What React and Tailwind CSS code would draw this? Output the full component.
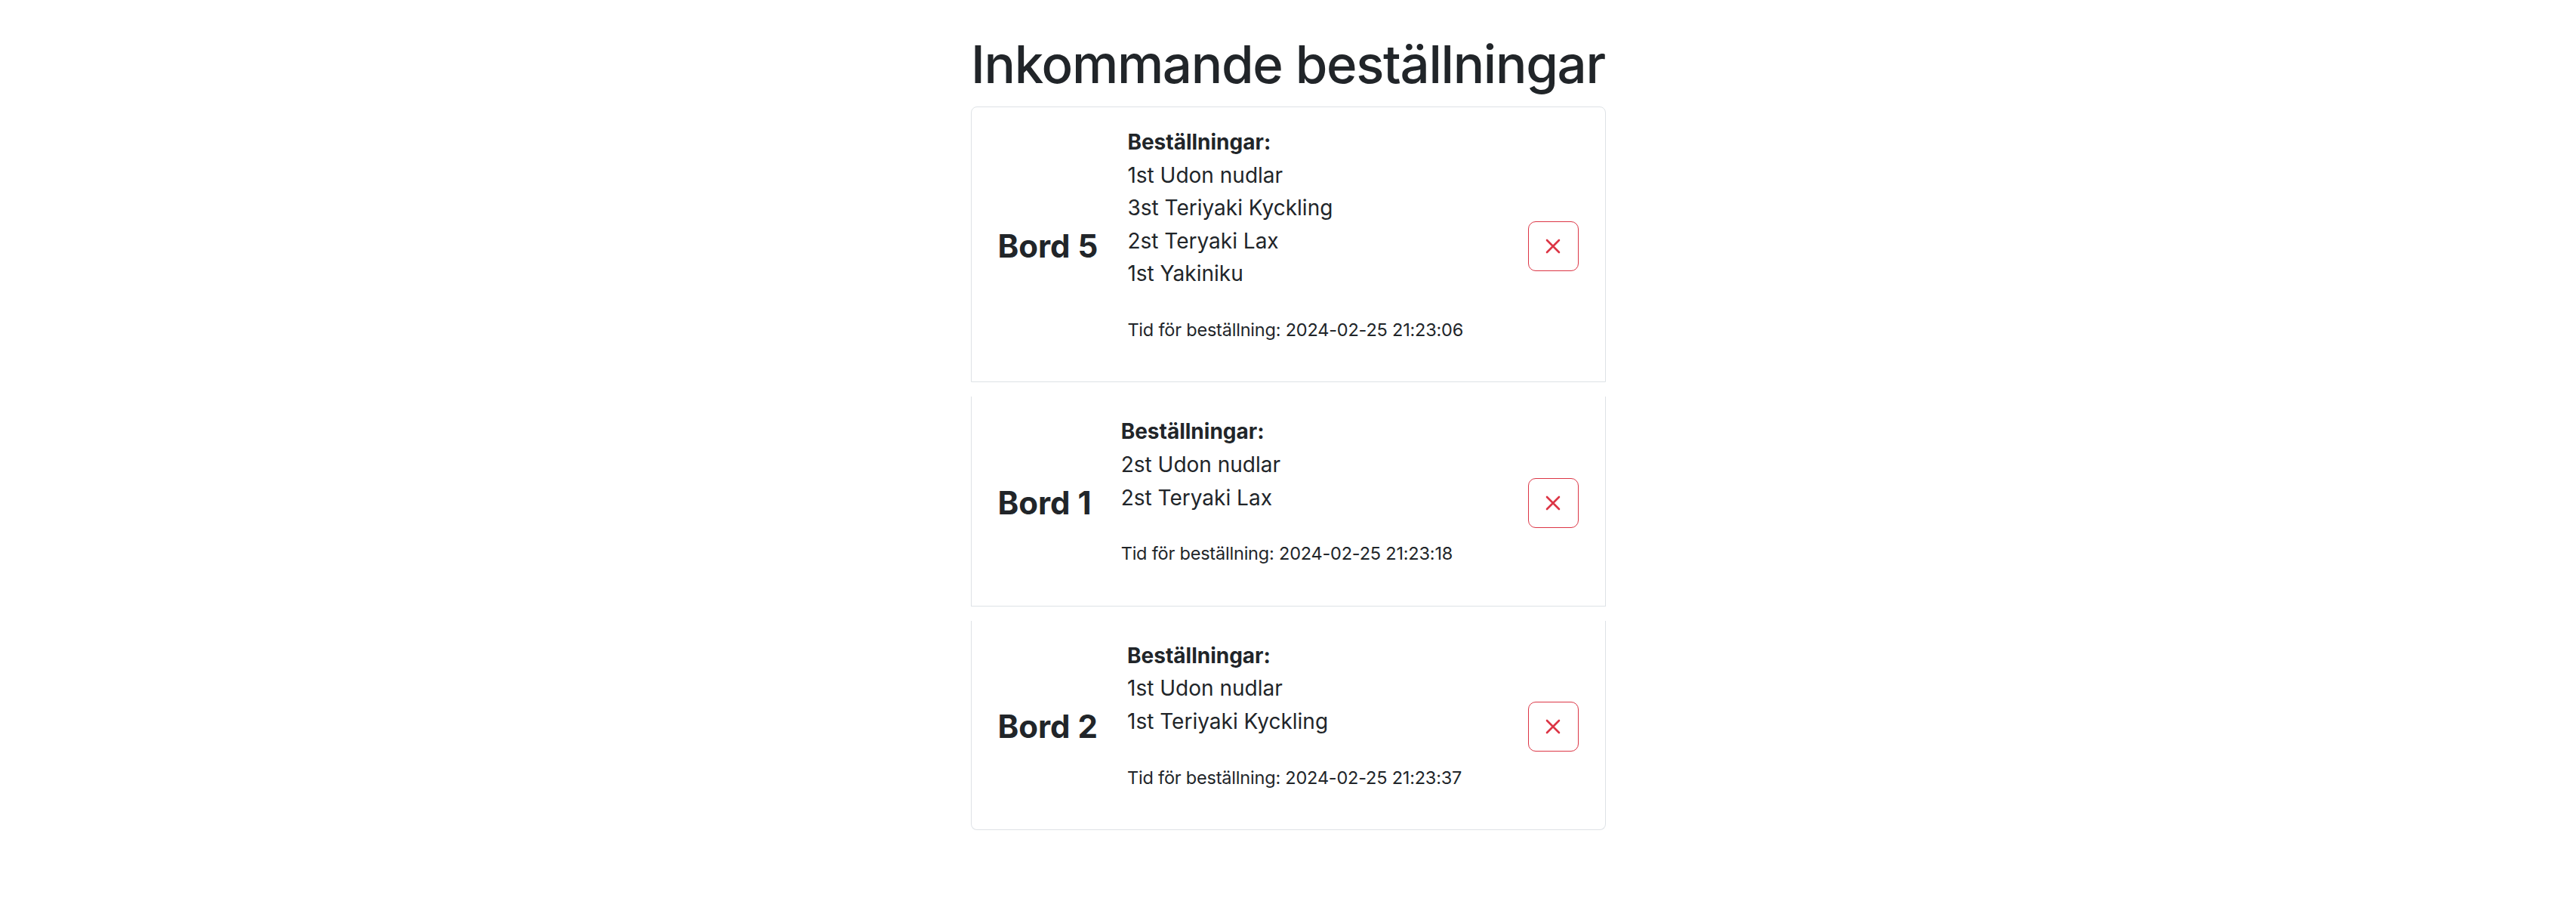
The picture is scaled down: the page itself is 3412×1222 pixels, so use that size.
import React from "react";

const orders = [
  {
    table: "Bord 5",
    items: ["1st Udon nudlar", "3st Teriyaki Kyckling", "2st Teryaki Lax", "1st Yakiniku"],
    time: "2024-02-25 21:23:06",
  },
  {
    table: "Bord 1",
    items: ["2st Udon nudlar", "2st Teryaki Lax"],
    time: "2024-02-25 21:23:18",
  },
  {
    table: "Bord 2",
    items: ["1st Udon nudlar", "1st Teriyaki Kyckling"],
    time: "2024-02-25 21:23:37",
  },
];

function XIcon() {
  return (
    <svg width="24" height="24" viewBox="0 0 24 24" fill="none">
      <path d="M4 4 L20 20 M20 4 L4 20" stroke="#dc3545" strokeWidth="2.6" strokeLinecap="round" />
    </svg>
  );
}

export default function App() {
  return (
    <div
      className="min-h-[1222px] bg-white text-[#212529]"
      style={{ fontFamily: "Inter, 'Noto Sans', 'Liberation Sans', sans-serif" }}
    >
      <div className="mx-auto w-[841px] pt-[43px]">
        <h1 className="text-center text-[69px] font-medium leading-[84px] tracking-[-1.3px] mb-[14px] whitespace-nowrap">
          Inkommande beställningar
        </h1>
        <div className="flex flex-col gap-[19px]">
          {orders.map((o, i) => (
            <div
              key={i}
              className={
                "flex items-center border-x border-b border-[#dee2e6] bg-white px-[35px] pt-[25px] pb-[20px] " +
                (i === 0 ? "border-t rounded-t-[8px] " : "") +
                (i === orders.length - 1 ? "rounded-b-[8px]" : "")
              }
            >
              <div className="mr-[39px] text-[42px] font-bold leading-[50px] tracking-[0px] whitespace-nowrap">
                {o.table}
              </div>
              <div className="flex flex-col">
                <div className="text-[28px] font-bold leading-[43.6px] whitespace-nowrap">Beställningar:</div>
                {o.items.map((it, j) => (
                  <div key={j} className="text-[28px] leading-[43.6px] whitespace-nowrap">
                    {it}
                  </div>
                ))}
                <div className="mt-[33px] mb-[30px] text-[23.5px] leading-[37.5px] tracking-[-0.2px] whitespace-nowrap">
                  Tid för beställning: {o.time}
                </div>
              </div>
              <button className="ml-auto flex h-[66px] w-[67px] items-center justify-center rounded-[10px] border border-[#dc3545] bg-white">
                <XIcon />
              </button>
            </div>
          ))}
        </div>
      </div>
    </div>
  );
}
